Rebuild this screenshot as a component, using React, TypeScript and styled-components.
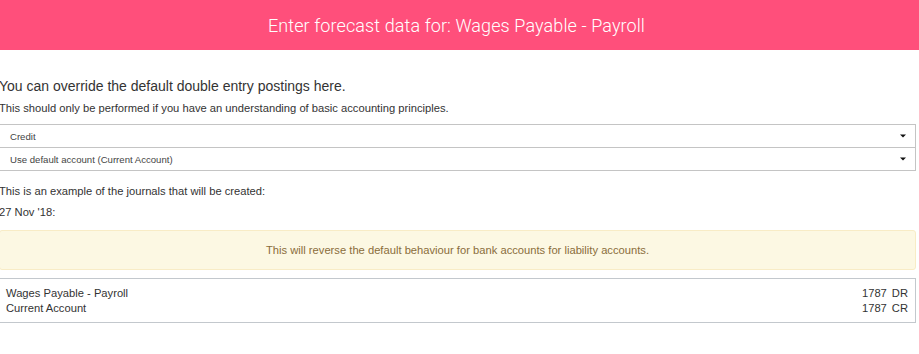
import React from "react";
import styled, { createGlobalStyle } from "styled-components";

const Global = createGlobalStyle`
  html, body { margin: 0; padding: 0; background: #fff; }
  body { font-family: "Liberation Sans", Arial, sans-serif; color: #333; }
`;

const Page = styled.div`
  width: 919px;
  overflow: hidden;
`;

const Header = styled.header`
  height: 50px;
  background: #ff4f7b;
  display: flex;
  align-items: center;
  justify-content: center;
  padding-right: 6px;
  box-sizing: border-box;
`;

const Title = styled.h1`
  margin: 0;
  font-family: Roboto, "Liberation Sans", sans-serif;
  font-weight: 300;
  font-size: 18px;
  color: #fff;
  letter-spacing: 0.1px;
`;

const Content = styled.main`
  margin: 0 3px 0 -1px;
  display: flex;
  flex-direction: column;
`;

const Heading = styled.h2`
  margin: 26px 0 0;
  font-size: 14px;
  line-height: 20px;
  font-weight: 400;
  color: #333;
`;

const Text = styled.p<{ $mt: number }>`
  margin: ${(p) => p.$mt}px 0 0;
  font-size: 11.2px;
  line-height: 15px;
  color: #333;
`;

const SelectStack = styled.div`
  margin-top: 8px;
  display: flex;
  flex-direction: column;
`;

const SelectBox = styled.div`
  height: 24px;
  box-sizing: border-box;
  border: 1px solid #c4c4c4;
  display: flex;
  align-items: center;
  justify-content: space-between;
  padding: 0 9px 0 10px;
  font-size: 9.6px;
  color: #444;
  background: #fff;
  & + & {
    margin-top: -1px;
  }
`;

const Caret = () => (
  <svg width="6" height="4" viewBox="0 0 6 4">
    <path d="M0 0.5 H6 L3 3.5 Z" fill="#111" />
  </svg>
);

const Alert = styled.div`
  margin-top: 10px;
  border: 1px solid #f8ecc6;
  background: #fcf8e3;
  border-radius: 3px;
  padding: 11.5px 15px;
  text-align: center;
  font-size: 11.2px;
  line-height: 15px;
  color: #8a6d3b;
`;

const Journal = styled.div`
  margin-top: 8px;
  border: 1px solid #c3c8cd;
  padding: 7.4px 7px 6.6px 6px;
  font-size: 11.2px;
  line-height: 14.5px;
  color: #333;
`;

const JournalRow = styled.div`
  display: flex;
  justify-content: space-between;
`;

const Amount = styled.span`
  display: inline-flex;
  gap: 5px;
`;

const lines = [
  { account: "Wages Payable - Payroll", amount: 1787, side: "DR" },
  { account: "Current Account", amount: 1787, side: "CR" },
];

export default function App() {
  return (
    <Page>
      <Global />
      <Header>
        <Title>Enter forecast data for: Wages Payable - Payroll</Title>
      </Header>
      <Content>
        <Heading>You can override the default double entry postings here.</Heading>
        <Text $mt={5}>
          This should only be performed if you have an understanding of basic accounting principles.
        </Text>
        <SelectStack>
          <SelectBox>
            <span>Credit</span>
            <Caret />
          </SelectBox>
          <SelectBox>
            <span>Use default account (Current Account)</span>
            <Caret />
          </SelectBox>
        </SelectStack>
        <Text $mt={13}>This is an example of the journals that will be created:</Text>
        <Text $mt={6}>27 Nov '18:</Text>
        <Alert>This will reverse the default behaviour for bank accounts for liability accounts.</Alert>
        <Journal>
          {lines.map((l) => (
            <JournalRow key={l.account}>
              <span>{l.account}</span>
              <Amount>
                <span>{l.amount}</span>
                <span>{l.side}</span>
              </Amount>
            </JournalRow>
          ))}
        </Journal>
      </Content>
    </Page>
  );
}
